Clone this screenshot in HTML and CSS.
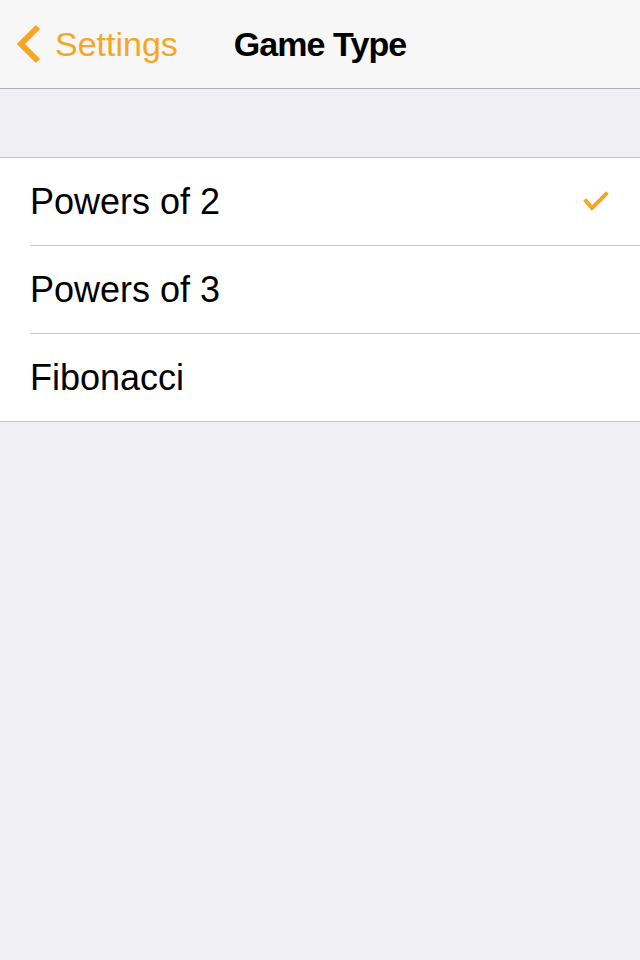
FILE: index.html
```html
<!DOCTYPE html>
<html>
<head>
<meta charset="utf-8">
<link rel="stylesheet" href="styles.css">
</head>
<body>
<header class="nav">
  <div class="nav-left">
    <svg class="chev" width="28" height="40" viewBox="0 0 28 40"><polyline points="22,3 5,20 22,37" fill="none" stroke="#f6a623" stroke-width="6" stroke-linecap="butt" stroke-linejoin="miter"/></svg>
    <span class="back">Settings</span>
  </div>
  <div class="title">Game Type</div>
  <div></div>
</header>
<div class="spacer"></div>
<ul class="list">
  <li class="row"><span>Powers of 2</span>
    <svg class="check" width="28" height="24" viewBox="0 0 28 24"><polyline points="4,11 10,18 24,4" fill="none" stroke="#f6a623" stroke-width="4" stroke-linecap="square"/></svg>
  </li>
  <li class="row"><span>Powers of 3</span></li>
  <li class="row"><span>Fibonacci</span></li>
</ul>
</body>
</html>
```
FILE: styles.css
```css
html, body {
  margin: 0;
  padding: 0;
  background: #efeff4;
  font-family: "Liberation Sans", Arial, sans-serif;
}
.nav {
  height: 88px;
  background: #f7f7f7;
  border-bottom: 1px solid #b2b2b2;
  display: grid;
  grid-template-columns: 1fr auto 1fr;
  align-items: center;
}
.nav-left {
  display: flex;
  align-items: center;
  padding-left: 16px;
  gap: 11px;
}
.chev { display: block; }
.back {
  color: #f6a623;
  font-size: 34px;
}
.title {
  font-size: 34px;
  font-weight: bold;
  letter-spacing: -0.9px;
  color: #000;
}
.spacer { height: 68px; }
.list {
  list-style: none;
  margin: 0;
  padding: 0;
  background: #fff;
  border-top: 1px solid #c8c7cc;
  border-bottom: 1px solid #c8c7cc;
}
.row {
  height: 87px;
  margin-left: 30px;
  padding-right: 30px;
  display: flex;
  align-items: center;
  justify-content: space-between;
  font-size: 36px;
  color: #000;
  border-bottom: 1px solid #c8c7cc;
}
.row:last-child { border-bottom: none; }
.check { display: block; }
```
